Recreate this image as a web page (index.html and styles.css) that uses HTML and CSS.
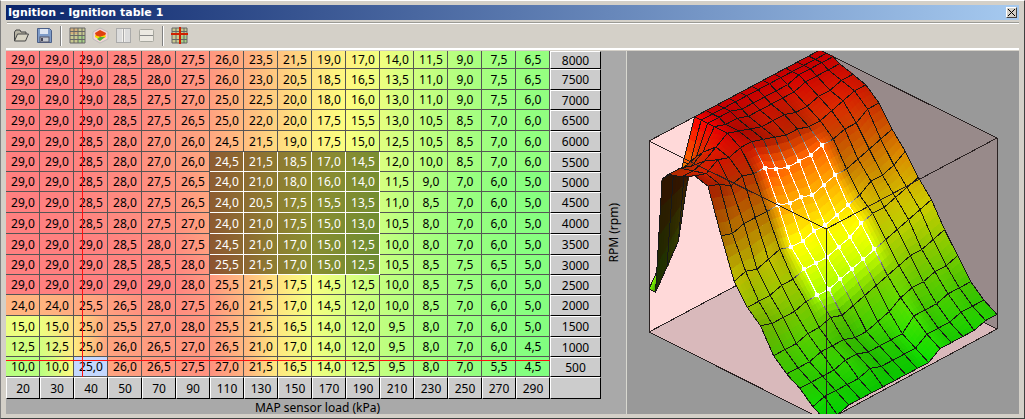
FILE: index.html
```html
<!DOCTYPE html>
<html lang="en">
<head>
<meta charset="utf-8">
<title>Ignition - Ignition table 1</title>
<link rel="stylesheet" href="styles.css">
</head>
<body>
<div class="window">
  <header class="titlebar">
    <span class="title">Ignition - Ignition table 1</span>
    <button class="close" aria-label="Close"><svg width="7" height="7" viewBox="0 0 7 7"><path d="M0 0L7 7M7 0L0 7" stroke="#000" stroke-width="1"/></svg></button>
  </header>
  <nav class="toolbar">
    <svg class="tool" width="17" height="17" viewBox="0 0 17 17"><path d="M1.5 14V5l1.500-2h4l1 2h5v2" fill="#b8b4a4" stroke="#444"/><path d="M1.500 14l3-7h11l-3 7z" fill="#d8d4c4" stroke="#444"/></svg>
    <svg class="tool" width="17" height="17" viewBox="0 0 17 17"><path d="M1.500 1.500h12l2 2v12h-14z" fill="#7f9cc8" stroke="#4a5f88"/><rect x="4" y="2" width="8" height="5" fill="#dfe6f2"/><rect x="4" y="10" width="9" height="5" fill="#c4c8d0" stroke="#556"/><rect x="5" y="11" width="2" height="3" fill="#445"/></svg>
    <span class="sep"></span>
    <svg class="tool" width="17" height="17" viewBox="0 0 17 17"><rect x="1" y="1" width="15" height="15" fill="#c8c890"/><rect x="1" y="1" width="8" height="6" fill="#d4b07c"/><rect x="9" y="9" width="7" height="7" fill="#a8d088"/><path d="M1 1h15v15H1zM1 4.500h15M1 8.500h15M1 12.500h15M5 1v15M9 1v15M13 1v15" fill="none" stroke="#666"/></svg>
    <svg class="tool" width="17" height="17" viewBox="0 0 17 17"><path d="M1 5l7-4 8 4v7l-8 4-7-4z" fill="#f4d4d8" stroke="#bbb"/><path d="M3 6l5-3 6 3-1 3-5 1-4-1z" fill="#e04010"/><path d="M3 8l5 2 5-2 1 2-6 3-5-3z" fill="#f8d800"/><path d="M5 12l3-2 5 0-5 4z" fill="#50b040"/></svg>
    <svg class="tool" width="17" height="17" viewBox="0 0 17 17"><rect x="1.500" y="1.500" width="14" height="14" fill="#f4f2ee" stroke="#aaa"/><rect x="2" y="2" width="5" height="13" fill="#dcdcdc"/><rect x="10" y="2" width="5" height="13" fill="#dcdcdc"/><path d="M8.500 2v13" stroke="#aaa"/></svg>
    <svg class="tool" width="17" height="17" viewBox="0 0 17 17"><rect x="1.500" y="2.500" width="14" height="12" rx="1" fill="#ece9e2" stroke="#a8a8a0"/><path d="M2 8.500h13" stroke="#888"/></svg>
    <span class="sep"></span>
    <svg class="tool" width="17" height="17" viewBox="0 0 17 17"><rect x="1" y="1" width="15" height="15" fill="#c8c890"/><rect x="9" y="9" width="7" height="7" fill="#a8d088"/><path d="M1 1h15v15H1zM1 4.500h15M1 12.500h15M5 1v15M13 1v15" fill="none" stroke="#666"/><path d="M0 7h17M9 0v17" stroke="#d02000" stroke-width="2"/></svg>
  </nav>
  <div class="rule"></div>
  <main class="body">
    <section class="table-pane">
      <div class="grid" id="grid">
        <span class="cross-v"></span>
        <span class="cross-h"></span>
      </div>
      <div class="xlabel">MAP sensor load (kPa)</div>
    </section>
    <div class="ylabel"><span>RPM (rpm)</span></div>
    <div class="plot"><svg id="surface" width="393" height="366" viewBox="627 49 393 366"></svg></div>
  </main>
</div>
<script src="app.js"></script>
</body>
</html>
```

FILE: styles.css
```css
* { box-sizing: border-box; }
html, body { margin: 0; height: 100%; }
body {
  background: #d4d0c8;
  font-family: "Noto Sans", "DejaVu Sans", sans-serif;
  font-size: 12px;
  overflow: hidden;
}
.window {
  height: 419px;
  padding: 5px 5px 4px 6px;
  display: flex;
  flex-direction: column;
  background: #d4d0c8;
  border-top: 1px solid #fff;
  border-left: 1px solid #808080;
  border-right: 1px solid #404040;
  border-bottom: 1px solid #404040;
  box-shadow: inset 0 0 0 1px #d4d0c8;
}
.titlebar {
  margin: -1px 0 0 -1px;
  height: 15px;
  flex: none;
  display: flex;
  align-items: center;
  justify-content: space-between;
  padding: 0 2px 0 2px;
  background: linear-gradient(90deg, #0a246a, #a6caf0);
}
.title { color: #fff; font: bold 11px "DejaVu Sans", sans-serif; line-height: 15px; }
.close {
  width: 11px; height: 11px; padding: 0; margin: 0 0 0 0;
  display: flex; align-items: center; justify-content: center;
  background: #d4d0c8;
  border: 1px solid; border-color: #fff #404040 #404040 #fff;
}
.toolbar {
  margin-top: 2px;
  flex: none;
  height: 26px;
  display: flex;
  align-items: center;
  padding-left: 3px;
  border-top: 1px solid #9a9a94;
  box-shadow: inset 0 1px 0 #fff;
}
.tool { margin: 0 3px; flex: none; }
.toolbar .tool + .tool { margin-left: 3px; }
.sep { width: 1px; height: 20px; background: #808080; border-right: 1px solid #fff; box-sizing: content-box; margin: 0 4px; flex: none; }
.rule { height: 2px; background: #fff; flex: none; margin-left: -1px; }
.body { flex: 1; display: flex; min-height: 0; margin-left: -1px; margin-top: 1px; background: #a9a9a9; }
.table-pane { width: 595px; flex: none; display: flex; flex-direction: column; }
.grid {
  position: relative;
  display: grid;
  grid-template-columns: repeat(16, 34px) 51px;
  grid-template-rows: 18px 21px 20px 21px 21px 20px 20px 21px 21px 21px 20px 20px 21px 21px 20px 20px 22px;
  width: 595px;
  flex: none;
  background: #555;
}
.cell {
  display: flex;
  align-items: center;
  justify-content: center;
  color: #000;
  border-right: 1px solid #555;
  border-bottom: 1px solid #555;
  padding-left: 1px;
}
.cell.sel { color: #fff; border-color: #fff; }
.cell.focus { background: #c4d8ff !important; }
.axis {
  display: flex;
  align-items: center;
  justify-content: center;
  color: #000;
  background: #ccc;
  border-top: 1px solid #fff;
  border-left: 1px solid #fff;
  border-right: 1px solid #000;
  border-bottom: 1px solid #000;
}
.cross-v { position: absolute; left: 76px; top: 0; width: 1px; height: 326px; background: #ff1010; z-index: 2; }
.cross-h { position: absolute; left: 0; top: 309px; width: 544px; height: 1px; background: #ff1010; z-index: 2; }
.xlabel { flex: 1; display: flex; align-items: center; justify-content: center; padding-left: 28px; color: #000; }
.ylabel { width: 25px; flex: none; display: flex; align-items: center; justify-content: center; padding-left: 0; }
.ylabel span { writing-mode: vertical-rl; transform: rotate(180deg); color: #000; white-space: nowrap; }
.plot { flex: 1; min-width: 0; border-left: 1px solid #d8d8d0; background: #999; overflow: hidden; }
#surface { display: block; shape-rendering: crispEdges; }
```

FILE: app.js
```js
var loads = [20,30,40,50,70,90,110,130,150,170,190,210,230,250,270,290];
var rpms = [8000,7500,7000,6500,6000,5500,5000,4500,4000,3500,3000,2500,2000,1500,1000,500];
var data = [
[29,29,29,28.5,28,27.5,26,23.5,21.5,19,17,14,11.5,9,7.5,6.5],
[29,29,29,28.5,28,27.5,26,23,20.5,18.5,16.5,13.5,11,9,7.5,6.5],
[29,29,29,28.5,27.5,27,25,22.5,20,18,16,13,11,9,7.5,6],
[29,29,29,28.5,27.5,26.5,25,22,20,17.5,15.5,13,10.5,8.5,7,6],
[29,29,28.5,28,27,26,24.5,21.5,19,17.5,15,12.5,10.5,8.5,7,6],
[29,29,28.5,28,27,26,24.5,21.5,18.5,17,14.5,12,10,8.5,7,6],
[29,29,28.5,28,27.5,26.5,24,21,18,16,14,11.5,9,7,6,5],
[29,29,28.5,28,27.5,26.5,24,20.5,17.5,15.5,13.5,11,8.5,7,6,5],
[29,29,28.5,28,27.5,27,24,21,17.5,15,13,10.5,8,7,6,5],
[29,29,29,28.5,28,27.5,24.5,21,17,15,12.5,10,8,7,6,5],
[29,29,29,28.5,28.5,28,25.5,21.5,17,15,12.5,10.5,8.5,7.5,6.5,5],
[29,29,29,29,29,28,25.5,21.5,17.5,14.5,12.5,10,8.5,7.5,6,5],
[24,24,25.5,26.5,28,27.5,26,21.5,17,14.5,12,10,8.5,7,6,5],
[15,15,25,25.5,27,28,25.5,21.5,16.5,14,12,9.5,8,7,6,5],
[12.5,12.5,25,26,26.5,27,26.5,21,17,14,12,9.5,8,7,6,4.5],
[10,10,25,26,26.5,27.5,27,21.5,16.5,14,12.5,9.5,8,7,5.5,4.5]
];
var VMIN = 4.5, VMAX = 29;
function isSel(r, c) { return r >= 5 && r <= 10 && c >= 6 && c <= 10; }
function pure(v) {
  var t = (v - VMIN) / (VMAX - VMIN);
  return t < 0.5 ? [510 * t, 255, 0] : [255, 510 * (1 - t), 0];
}
function css(c) { return "rgb(" + Math.round(c[0]) + "," + Math.round(c[1]) + "," + Math.round(c[2]) + ")"; }
function cellColour(v, sel) {
  var c = pure(v), o = [c[0] / 2 + 128, c[1] / 2 + 128, 128];
  return sel ? [o[0] * 0.55, o[1] * 0.55, o[2] * 0.38] : o;
}
function at(r, c) { return data[Math.max(0, Math.min(15, r))][Math.max(0, Math.min(15, c))]; }

/* table */
var grid = document.getElementById("grid");
function add(cls, text, bg) {
  var el = document.createElement("div");
  el.className = cls;
  el.textContent = text;
  if (bg) el.style.background = bg;
  grid.appendChild(el);
}
data.forEach(function (row, r) {
  row.forEach(function (v, c) {
    var sel = isSel(r, c);
    var a = (at(r, c - 1) + v) / 2, b = (at(r, c + 1) + v) / 2;
    var bg = "linear-gradient(90deg," + css(cellColour(a, sel)) + "," + css(cellColour(b, sel)) + ")";
    add("cell" + (sel ? " sel" : "") + (r === 15 && c === 2 ? " focus" : ""), v.toFixed(1).replace(".", ","), bg);
  });
  add("axis", rpms[r]);
});
loads.forEach(function (l) { add("axis", l); });
add("axis", "");

/* 3D surface */
var NS = "http://www.w3.org/2000/svg";
var svg = document.getElementById("surface");
function el(name, attrs, parent) {
  var e = document.createElementNS(NS, name);
  for (var k in attrs) e.setAttribute(k, attrs[k]);
  (parent || svg).appendChild(e);
  return e;
}
function poly(pts, fill, stroke) {
  el("polygon", { points: pts.map(function (p) { return p[0].toFixed(1) + "," + p[1].toFixed(1); }).join(" "), fill: fill, stroke: stroke || "none", "stroke-width": stroke ? 0.6 : 0 });
}
function u(c) { return (loads[c] - 20) / 270; }
function w(r) { return (15 - r) / 15; }
function h(v) { return (v - VMIN) / (VMAX - VMIN); }
function project(x, y, z) {
  return [649 + x * 177 + y * 171, 330 + x * 89 - y * 91 - z * 191];
}
function P(r, c) { return project(u(c), w(r), h(data[r][c])); }

/* walls and floor */
poly([[649,139],[820,48],[820,239],[649,330]], "#ffd9d9");
poly([[820,48],[997,136],[997,327],[820,239]], "#988a8a");
poly([[649,330],[820,239],[997,327],[826,419]], "#d9b9bb");
function line(a, b, col) { el("line", { x1: a[0], y1: a[1], x2: b[0], y2: b[1], stroke: col, "stroke-width": 1 }); }
[[[649,139],[820,48]],[[820,48],[997,136]],[[649,330],[820,239]],[[820,239],[997,327]],[[649,139],[649,330]],[[997,136],[997,327]]].forEach(function (s) { line(s[0], s[1], "#2a2222"); });

/* per-vertex colours */
function normalAt(r, c) {
  var r0 = Math.max(0, r - 1), r1 = Math.min(15, r + 1), c0 = Math.max(0, c - 1), c1 = Math.min(15, c + 1);
  var dzdx = (h(data[r][c1]) - h(data[r][c0])) / (u(c1) - u(c0));
  var dzdy = (h(data[r0][c]) - h(data[r1][c])) / (w(r0) - w(r1));
  var n = [-dzdx, -dzdy, 1], l = Math.sqrt(n[0] * n[0] + n[1] * n[1] + 1);
  return [n[0] / l, n[1] / l, n[2] / l];
}
var vcol = data.map(function (row, r) {
  return row.map(function (v, c) {
    var n = normalAt(r, c);
    var lit = Math.max(0, n[0] * 0.15 - n[1] * 0.75 + n[2] * 0.45);
    var s = isSel(r, c) ? 1.02 : Math.min(1, 0.55 + lit * 0.5);
    var p = pure(v);
    return [p[0] * s, p[1] * s, p[2] * s];
  });
});
function lerp(a, b, t) { return [a[0] + (b[0] - a[0]) * t, a[1] + (b[1] - a[1]) * t, a[2] + (b[2] - a[2]) * t]; }
function area(a, b, c, d) {
  var s = 0, q = [a, b, c, d];
  for (var i = 0; i < 4; i++) { var n = q[(i + 1) % 4]; s += q[i][0] * n[1] - n[0] * q[i][1]; }
  return s;
}
function edge(a, b, ca, cb) {
  var N = (ca === cb) ? 1 : 4;
  for (var i = 0; i < N; i++) {
    var t = (i + 0.5) / N, g = Math.round(ca + (cb - ca) * t);
    line(lerp(a.concat(0), b.concat(0), i / N), lerp(a.concat(0), b.concat(0), (i + 1) / N), "rgb(" + g + "," + g + "," + g + ")");
  }
}
function lineTone(r, c) { return isSel(r, c) ? 255 : 24; }

var SUB = 4;
for (var c = 0; c < 15; c++) {
  for (var r = 0; r < 15; r++) {
    var a = P(r, c), b = P(r, c + 1), d = P(r + 1, c + 1), e = P(r + 1, c);
    var ca = vcol[r][c], cb = vcol[r][c + 1], cd = vcol[r + 1][c + 1], ce = vcol[r + 1][c];
    var back = area(a, b, d, e) < 0 ? 0.36 : 1;
    for (var i = 0; i < SUB; i++) {
      for (var j = 0; j < SUB; j++) {
        var s0 = i / SUB, s1 = (i + 1) / SUB, t0 = j / SUB, t1 = (j + 1) / SUB;
        var pos = function (s, t) { return lerp(lerp(a.concat(0), b.concat(0), s), lerp(e.concat(0), d.concat(0), s), t); };
        var col = lerp(lerp(ca, cb, (s0 + s1) / 2), lerp(ce, cd, (s0 + s1) / 2), (t0 + t1) / 2);
        var fill = css([col[0] * back, col[1] * back, col[2] * back]);
        poly([pos(s0, t0), pos(s1, t0), pos(s1, t1), pos(s0, t1)], fill, fill);
      }
    }
    edge(a, b, lineTone(r, c), lineTone(r, c + 1));
    edge(a, e, lineTone(r, c), lineTone(r + 1, c));
    edge(b, d, lineTone(r, c + 1), lineTone(r + 1, c + 1));
    edge(e, d, lineTone(r + 1, c), lineTone(r + 1, c + 1));
  }
}
/* selected points */
data.forEach(function (row, r) {
  row.forEach(function (v, c) {
    if (isSel(r, c)) {
      var p = P(r, c);
      el("rect", { x: Math.round(p[0]) - 2, y: Math.round(p[1]) - 2, width: 4, height: 4, fill: "#fff" });
    }
  });
});
/* front edges of the box, over the surface */
[[[649,139],[826,227]],[[997,136],[826,227]],[[826,227],[826,419]],[[649,330],[826,419]],[[997,327],[826,419]]].forEach(function (s) { line(s[0], s[1], "#2a2222"); });
```
